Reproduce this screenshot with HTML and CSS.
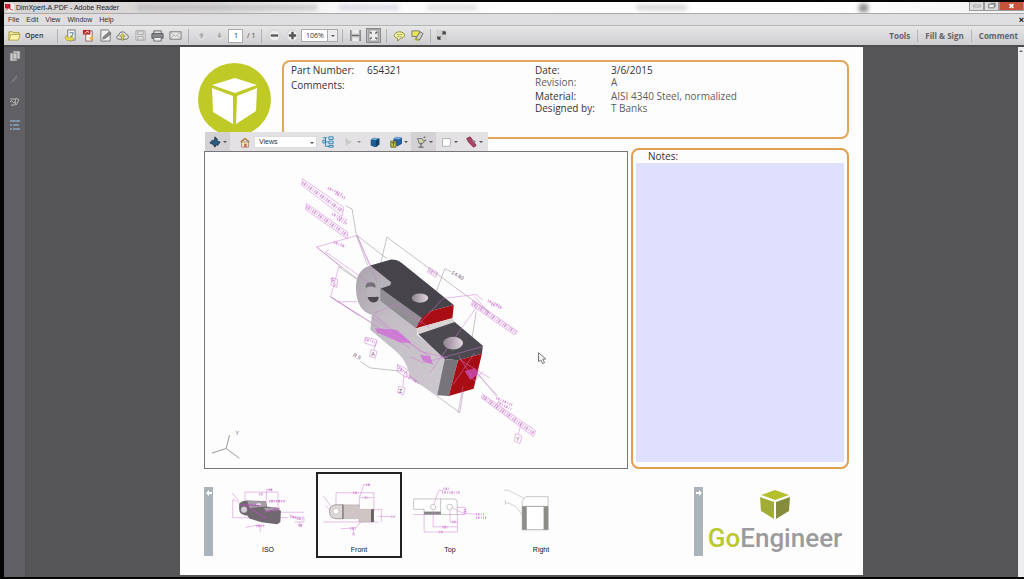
FILE: index.html
```html
<!DOCTYPE html>
<html lang="en">
<head>
<meta charset="utf-8">
<title>DimXpert-A.PDF - Adobe Reader</title>
<link rel="stylesheet" href="styles.css">
</head>
<body>
<div class="window">
  <header class="titlebar">
    <svg class="app-icon" viewBox="0 0 10 10"><path d="M2 0h6l2 2v8H2z" fill="#f4eded"/><path d="M0 1h6v5H0z" fill="#b5172c"/><path d="M1 5l3-4M2 2l4 5 3 1M2 8l2-3" stroke="#c33" fill="none"/></svg>
    <span>DimXpert-A.PDF - Adobe Reader</span>
    <span class="haze haze-long"></span><span class="haze haze-mid"></span><span class="haze haze-tiny"></span>
    <span class="haze haze-far"></span><span class="haze haze-dot"></span>
    <span class="win-buttons">
      <button aria-label="Minimize"><svg viewBox="0 0 14 8"><path d="M4 3h7v2H4z" fill="#fff" stroke="#777" stroke-width=".7"/></svg></button>
      <button aria-label="Restore"><svg viewBox="0 0 14 8"><path d="M4 2h6v4H4zM6 1h5v4" fill="#eee" stroke="#777"/></svg></button>
      <button class="close" aria-label="Close"><svg viewBox="0 0 24 8"><path d="M10 2l4 4M14 2l-4 4" stroke="#fff" stroke-width="1.6"/></svg></button>
    </span>
  </header>
  <nav class="menubar">
    <button>File</button><button>Edit</button><button>View</button><button>Window</button><button>Help</button>
    <button class="doc-close" aria-label="Close document">×</button>
  </nav>
  <div class="toolbar">
    <button class="open"><svg viewBox="0 0 14 14"><path d="M1 12V3h4l1 1h6v2" fill="#f3e79a" stroke="#a89a42"/><path d="M1 12l2-6h10l-2 6z" fill="#fbf4a8" stroke="#b3a548"/></svg>Open</button>
    <i class="sep"></i>
    <div class="group files">
      <button aria-label="Export"><svg viewBox="0 0 14 14"><path d="M4 1h8v11H4z" fill="#eef2f5" stroke="#777"/><path d="M1 8c0 5 4 5 6 4v2l4-4-4-3v2c-2 1-4 0-4-2z" fill="#e8d94a" stroke="#8d8434" stroke-width=".5"/><path d="M6 4l4 0-2 5" stroke="#548099" fill="none"/></svg></button>
      <button aria-label="Create PDF"><svg viewBox="0 0 14 14"><path d="M4 2h7v11H4z" fill="#f7f1ed" stroke="#866"/><path d="M1 1h8v5H1z" fill="#b62a2a"/><path d="M3 5l3-3 1 2" stroke="#fff" fill="none"/><path d="M10 7l1 2 2 1-2 1-1 2-1-2-2-1 2-1z" fill="#f0b73c"/></svg></button>
      <button aria-label="Edit"><svg viewBox="0 0 14 14"><path d="M2 1h8l2 3v9H2z" fill="#eee" stroke="#777"/><path d="M4 11l1-3 6-5 2 2-6 5z" fill="#888" stroke="#555" stroke-width=".6"/></svg></button>
      <button aria-label="Cloud"><svg viewBox="0 0 14 14"><path d="M3 11C0 11 0 7 3 7c0-5 7-5 8-1 3 0 3 5 0 5z" fill="#e2e2e2" stroke="#666"/><path d="M7 5l3 3H8v4H6V8H4z" fill="#d7cf45" stroke="#77722e" stroke-width=".5"/></svg></button>
      <button aria-label="Save" disabled><svg viewBox="0 0 14 14" stroke="#aaa" fill="#ddd"><path d="M2 2h10v10H2zM4 2h6v4H4zM4 8h6v4H4z"/></svg></button>
      <button aria-label="Print"><svg viewBox="0 0 14 14"><path d="M3 2h8v4H3z" fill="#ddd" stroke="#666"/><path d="M1 5h12v5H1z" fill="#8a8d90" stroke="#555"/><path d="M3 9h8v4H3z" fill="#eee" stroke="#666"/></svg></button>
      <button aria-label="Email"><svg viewBox="0 0 14 14"><path d="M1 3h12v8H1z" fill="#e9e9e9" stroke="#777"/><path d="M1 3l6 5 6-5M1 11l4-4M13 11L9 7" fill="none" stroke="#999" stroke-width=".8"/></svg></button>
    </div>
    <i class="sep"></i>
    <div class="group pages">
      <button aria-label="Previous page" disabled><svg viewBox="0 0 14 14"><circle cx="7" cy="7" r="5" fill="#ddd"/><path d="M7 4l3 3H8v3H6V7H4z" fill="#aaa"/></svg></button>
      <button aria-label="Next page" disabled><svg viewBox="0 0 14 14"><circle cx="7" cy="7" r="5" fill="#ddd"/><path d="M7 10l3-3H8V4H6v3H4z" fill="#aaa"/></svg></button>
    </div>
    <input class="page-no" value="1" aria-label="Page"><span class="page-total">/ 1</span>
    <i class="sep"></i>
    <div class="group pages">
      <button aria-label="Zoom out"><svg viewBox="0 0 14 14"><circle cx="7" cy="7" r="6" fill="#eee" stroke="#ccc"/><path d="M3 7h8" stroke="#555" stroke-width="2.4"/></svg></button>
      <button aria-label="Zoom in"><svg viewBox="0 0 14 14"><circle cx="7" cy="7" r="6" fill="#eee" stroke="#ccc"/><path d="M3 7h8M7 3v8" stroke="#555" stroke-width="2.6"/></svg></button>
    </div>
    <span class="picker zoom-picker"><select aria-label="Zoom"><option>106%</option></select></span>
    <i class="sep"></i>
    <div class="group pages">
      <button aria-label="Fit width"><svg viewBox="0 0 14 14"><path d="M2 1v12M12 1v12" stroke="#777" stroke-width="1.400"/><path d="M4 1h6v3H4zM4 10h6v3H4z" fill="#eee"/><path d="M3 7h8" stroke="#666" stroke-width="1.600"/></svg></button>
      <button class="active" aria-label="Fit page"><svg viewBox="0 0 14 14"><path d="M2 1h10v12H2z" fill="#eee" stroke="#888"/><path d="M3 3l2 2M11 3L9 5M3 11l2-2M11 11L9 9" stroke="#666" stroke-width="1.600"/></svg></button>
    </div>
    <i class="sep"></i>
    <div class="group pages">
      <button aria-label="Comment bubble"><svg viewBox="0 0 14 14"><path d="M5 10C-1 9 1 3 7 3s8 6 1 7l-3 3z" fill="#edf0a0" stroke="#888b3d"/><path d="M4 6h6M4 8h5" stroke="#a8a655" stroke-width=".8"/></svg></button>
      <button aria-label="Highlight"><svg viewBox="0 0 14 14"><path d="M1 2h8v6H1z" fill="#e8e557" stroke="#777"/><path d="M5 10l5-7 3 2-4 7z" fill="#d3d5bd" stroke="#667"/><path d="M4 11l4 1" stroke="#b0ad32" stroke-width="2"/></svg></button>
    </div>
    <i class="sep"></i>
    <button aria-label="Reading mode"><svg viewBox="0 0 14 14"><path d="M1 1h12v12H1z" fill="#d2d2d2"/><path d="M8 3h3v3zM3 8v3h3z" fill="#444" stroke="#444"/><path d="M8 6l2-2M4 10l2-2" stroke="#444" stroke-width="1.500"/></svg></button>
    <div class="panes"><button>Tools</button><button>Fill &amp; Sign</button><button>Comment</button></div>
  </div>
  <div class="workspace">
    <aside class="rail">
      <button aria-label="Page thumbnails"><svg viewBox="0 0 12 12"><path d="M4 1h7v8H4zM1 3h7v8H1z" fill="#c9c9c9" stroke="#777" stroke-width=".7"/></svg></button>
      <button aria-label="Attachments"><svg viewBox="0 0 12 12"><path d="M2 10l6-8M4 9l4-5" stroke="#7e8083" fill="none"/></svg></button>
      <button aria-label="Signatures"><svg viewBox="0 0 12 12"><path d="M1 3h5M1 6c3-4 3 4 5 0M2 9h4M7 2l3 2-3 5-1-3z" stroke="#bbb" fill="none"/></svg></button>
      <button aria-label="Model tree"><svg viewBox="0 0 12 12"><path d="M1 2h10M4 6h6M1 6h2M4 10h7M1 10h2" stroke="#8ba2bd" stroke-width="1.500" fill="none"/></svg></button>
    </aside>
    <main class="canvas">
      <article class="sheet">
        <section class="head">
          <svg class="badge" viewBox="0 0 73 73" role="img" aria-label="Cube logo"><circle cx="36.500" cy="36.500" r="36.500" fill="#bfca27"/><path d="M14 22l23-7 22 7-22 8zM14 25l21 8v28L15 49zM59 25l-20 8-1 28 20-13z" fill="#fff"/></svg>
          <div class="info">
            <dl class="left"><dt>Part Number:</dt><dd>654321</dd><dt>Comments:</dt><dd></dd></dl>
            <dl class="right"><dt>Date:</dt><dd>3/6/2015</dd><dt class="soft">Revision:</dt><dd class="soft">A</dd><dt class="next">Material:</dt><dd class="next soft">AISI 4340 Steel, normalized</dd><dt>Designed by:</dt><dd class="soft">T Banks</dd></dl>
          </div>
        </section>
        <section class="middle">
          <div class="model">
            <div class="model-tools">
              <button class="drop lit" aria-label="Rotate"><svg viewBox="0 0 14 14"><path d="M7 1l3 3-1 2 4 1-3 4-2-1-1 3-2-3-4-2 3-3 2 1z" fill="#2e5c80" stroke="#17344d"/></svg></button>
              <button class="home" aria-label="Home view"><svg viewBox="0 0 14 14"><path d="M3 7h8v6H3z" fill="#f9edb0" stroke="#987"/><path d="M2 7l5-4 5 4" fill="none" stroke="#a8782c" stroke-width="1.600"/><path d="M6 9h3v4H6z" fill="#c66"/></svg></button>
              <span class="picker view-picker"><select aria-label="Views"><option>Views</option></select></span>
              <button class="tree" aria-label="Model tree"><svg viewBox="0 0 14 14"><path d="M1 2h5M4 2v10h4M4 7h4M8 1h5v3H8zM8 6h5v3H8zM8 11h5v2H8zM1 5h3v3H1z" fill="#cde3f0" stroke="#2879a8"/></svg></button>
              <button class="drop faint" aria-label="Play"><svg viewBox="0 0 14 14"><path d="M3 3l8 4-8 4z" fill="#bbb"/></svg></button>
              <button class="cube" aria-label="Projection"><svg viewBox="0 0 14 14"><path d="M2 4l4-2 6 1v7l-5 3-5-2z" fill="#1d5d91"/><path d="M2 4l4-2 6 1-4 2z" fill="#69a6ce"/><path d="M8 5l4-2v7l-4 3z" fill="#123f69"/></svg></button>
              <button class="drop" aria-label="Render mode"><svg viewBox="0 0 14 14"><path d="M4 3l4-2 6 1v7l-5 3-5-2z" fill="#265fa0"/><path d="M4 3l4-2 6 1-4 2z" fill="#79a8d7"/><path d="M1 6h6v7H1z" fill="#c8cf3f" stroke="#555a27"/><path d="M2 8h4M4 7v5" stroke="#555a27"/></svg></button>
              <button class="drop lit" aria-label="Lighting"><svg viewBox="0 0 14 14"><path d="M3 3h5l3 4-3 2H5z" fill="#d8d5ab" stroke="#666"/><path d="M7 8v4M4 13h6M10 2l2-1M11 5h2" stroke="#666" stroke-width="1.400"/></svg></button>
              <button class="drop" aria-label="Background color"><svg viewBox="0 0 14 14"><path d="M3 3h9v9H3z" fill="#fff" stroke="#aaa"/></svg></button>
              <button class="drop" aria-label="Measure"><svg viewBox="0 0 14 14"><path d="M2 3l4-2 3 4 4 6-3 2-6-6z" fill="#b34065" stroke="#70304b"/><path d="M8 4l5 2-3 2z" fill="#888"/></svg></button>
            </div>
            <svg class="scene" viewBox="-378 -267 1272 954" role="img" aria-label="Clevis part with dimensions">
              <defs>
                <linearGradient id="side" x2="1" y2="1"><stop stop-color="#aaa5ad"/><stop offset=".4" stop-color="#c3bec5"/><stop offset="1" stop-color="#cdc9ce"/></linearGradient>
                <linearGradient id="hole"><stop stop-color="#8c858e"/><stop offset="1" stop-color="#e3d5df"/></linearGradient>
              </defs>
              <g class="dim-gray"><path d="M45-105l20 10 13 80 34 90M80-15l90 70M170-10l-20 85M170-10l310 228M345 85l-35 95M345 85l20 10M90 365l30 20 95 10M240 410l150 110M440 215l-50 305M440 400l65 70M0 170l285 180M-42 20l165 130M25 80l90 60"/></g>
              <path d="M120 76C90 84 75 110 77 150c2 40 17 65 48 75l-5 45 60 50c35 25 52 55 55 75l5 20 82 52 30-109-92-75 20-60-40-60-50-80z" fill="url(#side)"/>
              <path d="M150 142l150 75-42 48L150 182z" fill="#918e94"/>
              <path d="M120 76l60-18q20-1 35 10l157 127-70 18-25 22-125-90 28-10 3-9z" fill="#46444a"/>
              <path d="M302 213l70-18-4 40-110 30q10-30 44-52z" fill="#a70d12"/>
              <path d="M258 266l110-32 8 12-111 37z" fill="#dad4d4"/>
              <path d="M265 283l110-37 85 72-3 24-72 20-40-4z" fill="#4c4a50"/>
              <path d="M345 358l40 4-28 108-35-3z" fill="#77747a"/>
              <path d="M385 362l72-20-25 106-75 22z" fill="#a70d12"/>
              <g fill="url(#hole)"><ellipse cx="270" cy="174" rx="25" ry="14"/><ellipse cx="370" cy="310" rx="30" ry="19"/></g>
              <ellipse cx="121" cy="138" rx="15" ry="12" fill="#777079"/><path d="M112 170h33v5q-3 12-17 12-14-3-16-17z" fill="#4b464e"/><path d="M108 143q12-8 27 0l2 28h-24z" fill="#b9b3bb"/>
              <g class="dim"><path d="M-85-187L40-100l-5 27-122-94zM-73-112L52-25l-2 20-125-88zM430 180l135 95-10 10-130-90zM460 465l160 110-8 17-157-117z"/>
                <path d="M-42 20L80-15l40 90M80-15l60 140M-42 20l75 62M-15 35L120 130M-15 35l10-8M25 80L0 170l85 57M20 185l60 0M0 170l240 155M130 220l70-28 100 73M120 230L300 350M300 400l145-205M340 175l100-12 20 17M255 265l85-90M130 225l140 110 85 20M240 350l40 20 180-50M385 345l50 80 25-30M435 340l-65 95M390 360l90 55M400 440l-15 80M440 395l60 75M575 555l-8 30M140 305l-10 25M222 405l-4 35M200 375l70 60M435 170l45 50"/>
                <path d="M105 292l35 8-5 20-32-10zM122 330l18 5-5 20-17-5zM202 375l30 14-5 24-25-17zM206 440l19 5-5 21-18-6zM558 583l20 8-6 22-17-7zM5 112l17 6-3 24-18-8zM298 82l25 15-5 14-25-15z"/></g>
              <path class="stamp" d="M-84-175L36-88M-72-102L49-16M430 190l129 88M461 472l152 110"/>
              <path class="stamp small" d="M-8-158l46 20M15-142l28 14M5-80l45 20M20-65l28 14M475 182l40 17M485 192l32 12M500 475l48 22M505 488l40 22M230 410l35 20M10 5l35 14M3 114l13 24M298 92l22 10M105 298l28 10M206 385l20 15"/>
              <path d="M135 265l65 5 45 40-35-2-70-30zM270 345l30 5 10 25-30-10zM405 395l30-10 12 18-25 18z" fill="#d35cdb" fill-opacity=".65"/>
              <g class="scene-text"><text transform="translate(364 100) rotate(30)">14.60</text><text transform="translate(66 350) rotate(25)">R.5</text><text x="123" y="350">A</text><text x="207" y="461">Z</text><text x="560" y="606">Y</text><text x="-287" y="588">Y</text></g>
              <path d="M-315 628l-43 14M-315 628l10-40M-315 628l40 30" stroke="#999" stroke-width="3"/>
              <path d="M628 339v27l7-5 5 11 6-3-5-11h9z" fill="#f5f5f5" stroke="#777" stroke-width="3"/>
            </svg>
          </div>
          <div class="notes"><label for="notes">Notes:</label><textarea id="notes"></textarea></div>
        </section>
        <section class="views">
          <button class="scroll" aria-label="Previous views"><svg viewBox="0 0 8 8"><path d="M1 4l3-3v2h3v2H4v2z" fill="#fff"/></svg></button>
          <button class="thumb"><svg viewBox="111 132 246 216"><g class="dim"><path d="M163 188h102M163 188v30M230 180l-2 50M230 180h18M265 190v60M123 190l22 25M125 212v55M125 267h170M125 210l20 10M240 215h48M270 250h75M300 258l30 15M165 297l28-6h30M210 290v22M310 265h35v15h-30M332 280v15h6v-7h-6"/></g><path d="M145 223q10-10 25-9l57 1 4 17 28 4 15 10-2 35-10 6-48-6-38-12-5-8q-26-2-26-20z" fill="#71676f"/><path d="M170 215l57 1 4 16-54 5zM221 237l38-3 12 9-42 5z" fill="#a69ca4"/><circle cx="160" cy="242" r="10" fill="#d5ced5" stroke="#6d5d68"/><ellipse cx="205" cy="226" rx="8" ry="4" fill="#eee"/><path d="M174 235l55 35M220 250l50-12M150 227l60 2" stroke="#b54ebd" stroke-width="3"/><path class="stamp small" d="M238 216h48M303 263l42 10M198 292h24M207 194h10M236 181h14M328 290h10"/></svg><span>ISO</span></button>
          <button class="thumb selected"><svg viewBox="384 132 246 216"><g class="dim"><path d="M436 190h116M436 190v48M553 188v60M508 205h45M508 235v-30l14-40h20M397 200l25 34M403 230l18 15M397 280h170M552 241h24M576 241v39M567 263h40M450 301l45-3 18-17M490 300v16"/></g><path d="M438 227h20v43h-20q-22-1-22-22t22-21z" fill="#ddd7d8" stroke="#777" stroke-width="2"/><path d="M458 227h50v14h44v39h-45v-10h-49z" fill="#cfc5c5" stroke="#998d8d"/><path d="M544 241h9v39h-9M456 227h3v43h-3z" fill="#686264"/><circle cx="436" cy="247" r="9" fill="#fff" stroke="#877"/><path class="stamp small" d="M489 190h12M529 165h13M607 264h10M480 300h20M487 318h8M525 205h8"/></svg><span>Front</span></button>
          <button class="thumb"><svg viewBox="27 42 246 216"><g fill="#fff" stroke="#aaa" stroke-width="2"><path d="M38 119h124q10 0 10 10v38H70v-16H38z"/><circle cx="98" cy="144" r="8"/><circle cx="149" cy="144" r="9"/><path d="M121 119v48"/></g><path d="M70 158h52v9H70z" fill="#868686"/><g class="dim"><path d="M100 136l15-43h13M70 167v54h103v-54M98 155v50h75M150 155v35h22M37 167h35M158 147l32 16 40 3M172 145h25v22h-25"/></g><path class="stamp small" d="M130 88h20M126 99h54M230 166h26M230 177h32M127 206h16M117 221h10M157 190h10M196 150v14"/></svg><span>Top</span></button>
          <button class="thumb"><svg viewBox="300 42 246 216"><path d="M308 92h14l50 26M313 123v14M313 130q35 5 50 37" fill="none" stroke="#bbb" stroke-width="2"/><path d="M365 142v-15q3-10 12-15h68v30z" fill="#fff" stroke="#aaa" stroke-width="2"/><path d="M365 142h80v72h-80z" fill="#fff" stroke="#888" stroke-width="2"/><path d="M365 142h14v72h-14zM431 142h14v72h-14z" fill="#8d8d88"/></svg><span>Right</span></button>
          <div class="brand-side">
            <button class="scroll" aria-label="More views"><svg viewBox="0 0 8 8"><path d="M7 4L4 1v2H1v2h3v2z" fill="#fff"/></svg></button>
            <div class="brand"><svg viewBox="0 0 30 30"><path d="M1 5l14-5 14 5-14 5z" fill="#b4c12c"/><path d="M0 7l14 5v17L1 21z" fill="#a1ac37"/><path d="M30 7l-14 5v17l13-8z" fill="#858d3c"/></svg><span class="wordmark"><b>Go</b>Engineer</span></div>
          </div>
        </section>
      </article>
    </main>
    <div class="scrollbar"><i></i></div>
  </div>
</div>
</body>
</html>
```
FILE: styles.css
```css
* { box-sizing: border-box; }
body { margin: 0; background: #050505; font-family: "Open Sans", "Noto Sans", sans-serif; color: #444; }
button { border: 0; padding: 0; background: none; font: inherit; color: inherit; display: flex; align-items: center; justify-content: center; }
svg { display: block; }
.window { min-height: 100vh; padding: 2px 0 2px 4px; display: flex; flex-direction: column; }
.titlebar { height: 12px; display: flex; align-items: center; gap: 2px; padding-left: 1px; font: 7px/10px "Liberation Sans", sans-serif; color: #222; background: linear-gradient(90deg, #d5d2d2, #dcd9d9 20%, #fcfbfc 34%, #fff 80%, #f4f2f3); border-bottom: 1px solid #aaa; overflow: hidden; white-space: nowrap; }
.app-icon { width: 9px; height: 9px; }
.haze { height: 5px; background: #aaa; filter: blur(2px); opacity: .6; }
.haze-long { width: 180px; margin-left: 16px; }
.haze-mid { width: 60px; margin-left: 20px; opacity: .3; background: #88a; }
.haze-tiny { width: 50px; margin-left: 26px; opacity: .35; }
.haze-far { width: 50px; margin-left: 158px; opacity: .5; }
.haze-dot { width: 9px; height: 8px; margin-left: 170px; background: #444; }
.win-buttons { margin-left: auto; display: flex; align-self: flex-start; }
.win-buttons button { width: 15px; height: 9px; background: #dedbdc; border: 1px solid #999; border-top: 0; }
.win-buttons svg { width: 100%; height: 8px; }
.win-buttons .close { width: 25px; background: #c6533c; }
.menubar { height: 12px; display: flex; align-items: center; gap: 7px; padding: 0 0 0 4px; font: 7px/10px "Liberation Sans", sans-serif; color: #333; background: #dedddf; border-bottom: 1px solid #b5b4b7; }
.doc-close { margin-left: auto; font-size: 9px; font-weight: 700; color: #111; }
.toolbar { height: 19px; display: flex; align-items: center; padding: 0 6px 0 4px; background: linear-gradient(#e8e7e8, #cdcccf); font-size: 7px; line-height: 12px; }
.toolbar svg { width: 13px; height: 13px; }
.open { gap: 4px; font-weight: 600; color: #333; width: 45px; justify-content: flex-start; white-space: nowrap; }
.sep { width: 1px; height: 14px; background: #b2b1b4; margin: 0 4px; flex: none; }
.group { display: flex; justify-content: space-around; flex: none; }
.files { width: 122px; }
.pages { width: 35px; }
.pages .active { background: #bbb; outline: 1px solid #8a8a8c; }
.page-no { width: 15px; height: 14px; border: 1px solid #aaa; background: #fff; padding: 0 0 0 5px; font: inherit; color: #222; }
.page-total { padding-left: 4px; width: 14px; white-space: nowrap; }
.picker { position: relative; display: flex; flex: none; }
.picker select { appearance: none; width: 100%; border: 1px solid #aaa; border-radius: 0; background: #fff; font: inherit; color: #333; padding: 0 4px; }
.picker::after, .drop::after { content: ""; border: 2px solid transparent; border-top-color: #555; border-bottom: 0; flex: none; }
.picker::after { position: absolute; right: 3px; top: 6px; }
.zoom-picker { width: 37px; }
.zoom-picker select { height: 13px; background: linear-gradient(90deg, #fff 25px, #aaa 25px, #aaa 26px, #ececec 26px); }
.panes { margin-left: auto; display: flex; font-size: 8px; font-weight: 700; color: #62656e; white-space: nowrap; }
.panes button { padding: 0 7px; border-left: 1px solid #b5b4b7; }
.panes button:first-child { border: 0; }
.panes button:last-child { padding-right: 0; }
.workspace { flex: 1; display: flex; min-height: 0; border-top: 2px solid #4c4c4f; }
.rail { width: 22px; background: #606064; border-right: 1px solid #505052; padding: 3px 4px; display: flex; flex-direction: column; gap: 11px; }
.rail svg { width: 12px; height: 12px; }
.canvas { flex: 1; min-width: 0; background: #565658; padding: 0 9px 2px 8px; display: flex; justify-content: center; }
.scrollbar { width: 6px; background: #ededf0; padding: 3px 1px; }
.scrollbar i { display: block; border: 2px solid transparent; border-bottom-color: #666; border-top: 0; }
.sheet { flex: 0 1 683px; min-width: 0; background: #fefdfe; padding: 13px 14px 15px 18px; }
.head { display: flex; gap: 11px; height: 79px; }
.badge { width: 73px; height: 73px; margin-top: 3px; flex: none; }
.info { flex: 1; border: 2px solid #e2a55b; border-radius: 8px; padding: 2px 7px; display: flex; font-size: 10px; line-height: 12px; color: #333; }
dl, dd { margin: 0; }
.info dl { display: grid; align-content: start; white-space: nowrap; }
.left { grid-template-columns: 76px auto; row-gap: 3px; flex: 0 0 244px; }
.right { grid-template-columns: 76px auto; }
.next { margin-top: 2px; }
.soft { color: #5c5c5c; }
.middle { display: flex; gap: 3px; margin-top: 9px; padding-left: 6px; height: 321px; }
.model { flex: 1; min-width: 0; margin-top: 3px; border: 1px solid #77777a; background: #fefdfe; position: relative; }
.scene { width: 100%; height: 100%; }
.model-tools { position: absolute; left: 0; top: -20px; height: 19px; width: 283px; display: flex; align-items: center; background: #e3e1e3; font: 7px/10px "Liberation Sans", sans-serif; }
.model-tools svg { width: 12px; height: 12px; }
.model-tools button { height: 19px; flex: none; }
.drop { width: 25px; gap: 2px; }
.lit { background: #d3d1d4; }
.faint { opacity: .6; }
.home { width: 24px; padding-left: 6px; }
.view-picker { width: 63px; }
.view-picker select { height: 12px; border-color: #ddd; }
.tree { width: 22px; }
.cube { width: 22px; }
.notes { flex: 0 0 218px; border: 2px solid #e2a04e; border-radius: 8px; padding: 0 3px 5px; display: flex; flex-direction: column; font-size: 10px; line-height: 13px; color: #333; }
.notes label { padding-left: 12px; }
.notes textarea { flex: 1; border: 0; background: #dfe0fe; resize: none; width: 100%; font: inherit; }
.views { display: flex; gap: 5px; margin-top: 3px; padding-left: 6px; height: 86px; }
.scroll { width: 9px; height: 69px; background: #abb3bc; align-items: flex-start; padding-top: 2px; flex: none; margin: 15px 7px 0 0; }
.scroll svg { width: 8px; height: 8px; }
.thumb { width: 86px; border: 2px solid transparent; flex-direction: column; justify-content: flex-start; font: 7px/12px "Liberation Sans", sans-serif; color: #111; flex: none; }
.thumb svg { width: 82px; height: 72px; }
.selected { border-color: #222; }
.brand-side { margin-left: auto; display: flex; padding-right: 11px; gap: 2px; }
.brand { width: 126px; display: flex; flex-direction: column; align-items: center; padding-top: 18px; }
.brand svg { width: 30px; height: 30px; }
.wordmark { font: 500 26px/36px Roboto, sans-serif; color: #9b9b9d; white-space: nowrap; }
.wordmark b { font-weight: 500; color: #b9c92f; }
.dim path { fill: none; stroke: #cf78d2; stroke-width: 2; stroke-opacity: .75; }
.dim-gray path { fill: none; stroke: #aaa2ab; stroke-width: 2; }
.stamp { fill: none; stroke: #c258c8; stroke-width: 11; stroke-dasharray: 3 3 5 4 2 5; stroke-opacity: .6; }
.small { stroke-width: 8; }
.scene-text { font: 16px "Liberation Sans", sans-serif; fill: #6c526d; }
```
